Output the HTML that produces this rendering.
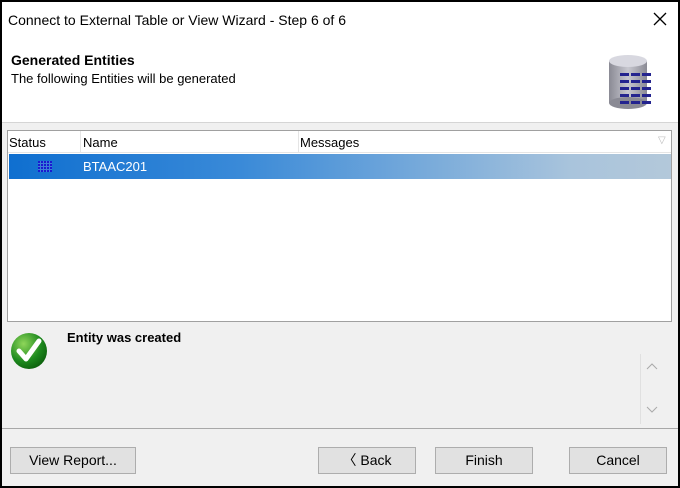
<!DOCTYPE html>
<html><head><style>
*{margin:0;padding:0;box-sizing:border-box}
body{width:680px;height:488px;background:#000;font-family:"Liberation Sans",sans-serif;font-size:13px;color:#000;position:relative;overflow:hidden}
.win{position:absolute;left:2px;top:2px;width:676px;height:484px;background:#f0f0f0}
.top{position:absolute;left:0;top:0;width:676px;height:121px;background:#fff;border-bottom:1px solid #d5d5d5}
.a{position:absolute;white-space:nowrap}
.list{position:absolute;left:5px;top:128px;width:665px;height:192px;background:#fff;border:1px solid #a0a0a0}
.btn{position:absolute;top:445px;height:27px;background:#e1e1e1;border:1px solid #adadad;text-align:center;line-height:25px;font-size:14px}
</style></head><body>
<div class="win">
<div class="top">
<div class="a" style="left:6px;top:10px;font-size:14px">Connect to External Table or View Wizard - Step 6 of 6</div>
<svg class="a" style="left:651px;top:10px" width="14" height="14"><path d="M1 1L13 13M13 1L1 13" stroke="#000" stroke-width="1.3"/></svg>
<div class="a" style="left:9px;top:50px;font-size:14px;font-weight:bold">Generated Entities</div>
<div class="a" style="left:9px;top:69px;font-size:13px">The following Entities will be generated</div>
<svg class="a" style="left:605px;top:52px" width="56" height="56" viewBox="0 0 56 56">
<defs><linearGradient id="g" x1="0" x2="1"><stop offset="0" stop-color="#8a8a94"/><stop offset=".5" stop-color="#c8c8d0"/><stop offset="1" stop-color="#8a8a94"/></linearGradient></defs>
<rect x="2" y="7" width="38" height="42" fill="url(#g)"/>
<ellipse cx="21" cy="49" rx="19" ry="6" fill="#8a8a94"/>
<ellipse cx="21" cy="7" rx="19" ry="6" fill="#d8d8e0"/>
<g fill="#24248f">
<rect x="13" y="19" width="9" height="3"/><rect x="24" y="19" width="9" height="3"/><rect x="35" y="19" width="9" height="3"/>
<rect x="13" y="26" width="9" height="3"/><rect x="24" y="26" width="9" height="3"/><rect x="35" y="26" width="9" height="3"/>
<rect x="13" y="33" width="9" height="3"/><rect x="24" y="33" width="9" height="3"/><rect x="35" y="33" width="9" height="3"/>
<rect x="13" y="40" width="9" height="3"/><rect x="24" y="40" width="9" height="3"/><rect x="35" y="40" width="9" height="3"/>
<rect x="13" y="47" width="9" height="3"/><rect x="24" y="47" width="9" height="3"/><rect x="35" y="47" width="9" height="3"/>
</g></svg>
</div>
<div class="list">
<div class="a" style="left:0;top:0;width:663px;height:22px;border-bottom:1px solid #e5e5e5"></div>
<div class="a" style="left:72px;top:0;height:22px;border-left:1px solid #e5e5e5"></div>
<div class="a" style="left:290px;top:0;height:22px;border-left:1px solid #e5e5e5"></div>
<div class="a" style="left:1px;top:4px">Status</div>
<div class="a" style="left:75px;top:4px">Name</div>
<div class="a" style="left:292px;top:4px">Messages</div>
<div class="a" style="left:650px;top:4px;color:#bbb;font-size:10px">▽</div>
<div class="a" style="left:1px;top:23px;width:662px;height:25px;background:linear-gradient(to right,#0f6fd0,#3a8ad8 35%,#a9c4dc 85%,#b3c8da)"></div>
<svg class="a" style="left:30px;top:30px" width="14" height="11">
<g fill="#1a1ad0"><rect x="0" y="0" width="14" height="11"/></g>
<g fill="#3a80d8"><rect x="2" y="0" width="1" height="11"/><rect x="5" y="0" width="1" height="11"/><rect x="8" y="0" width="1" height="11"/><rect x="11" y="0" width="1" height="11"/><rect x="0" y="2" width="14" height="1"/><rect x="0" y="5" width="14" height="1"/><rect x="0" y="8" width="14" height="1"/></g>
</svg>
<div class="a" style="left:75px;top:28px;color:#fff">BTAAC201</div>
</div>
<svg class="a" style="left:8px;top:330px" width="38" height="38" viewBox="0 0 38 38">
<defs><radialGradient id="r" cx=".35" cy=".3" r=".8"><stop offset="0" stop-color="#8fd65a"/><stop offset=".6" stop-color="#1e8a1e"/><stop offset="1" stop-color="#0a5a0a"/></radialGradient></defs>
<circle cx="19" cy="19" r="18" fill="url(#r)"/>
<path d="M9 19 L16 27 L29 9" stroke="#fff" stroke-width="5" fill="none" stroke-linecap="round" stroke-linejoin="round"/>
</svg>
<div class="a" style="left:65px;top:328px;font-weight:bold">Entity was created</div>
<div class="a" style="left:638px;top:352px;height:70px;border-left:1px solid #e0e0e0"></div>
<svg class="a" style="left:644px;top:360px" width="12" height="8"><path d="M1 7L6 2L11 7" stroke="#aaa" fill="none"/></svg>
<svg class="a" style="left:644px;top:404px" width="12" height="8"><path d="M1 1L6 6L11 1" stroke="#aaa" fill="none"/></svg>
<div class="a" style="left:0;top:426px;width:676px;border-top:1px solid #a8a8a8"></div>
<div class="btn" style="left:8px;width:126px">View Report...</div>
<div class="btn" style="left:316px;width:98px">〈 Back</div>
<div class="btn" style="left:433px;width:98px">Finish</div>
<div class="btn" style="left:567px;width:98px">Cancel</div>
</div>
</body></html>
